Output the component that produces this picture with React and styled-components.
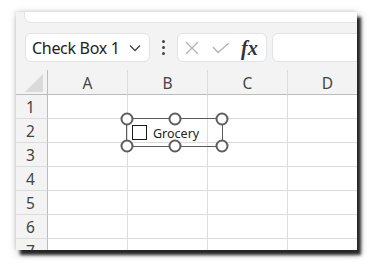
import React from 'react';
import styled, { createGlobalStyle } from 'styled-components';

const Global = createGlobalStyle`
  html, body { margin: 0; padding: 0; background: #fff; }
  body {
    width: 374px; height: 267px; overflow: hidden;
    font-family: "Noto Sans", "Liberation Sans", sans-serif;
  }
`;

const Stage = styled.div`
  width: 374px; height: 267px; box-sizing: border-box;
  padding: 12px 0 0 16px;
`;

const Window = styled.div`
  width: 341px; height: 238px;
  background: #f3f3f3;
  overflow: hidden;
  display: flex; flex-direction: column;
  box-shadow: 4px 5px 3px rgba(0,0,0,0.82), 2px 3px 9px rgba(0,0,0,0.28), -1px -1px 3px rgba(0,0,0,0.1);
`;

const Ribbon = styled.div`
  flex: none;
  height: 10px;
  margin-left: 8px;
  margin-right: -12px;
  background: #fff;
  border: 1px solid #e4e4e4;
  border-top: none;
  border-radius: 0 0 7px 7px;
`;

const FormulaBar = styled.div`
  flex: none;
  display: flex; align-items: center;
  height: 29px;
  margin-top: 10px;
  padding-left: 9px;
`;

const Field = styled.div`
  box-sizing: border-box;
  height: 29px;
  background: #fff;
  border: 1px solid #e2e2e2;
  border-radius: 6px;
  display: flex; align-items: center;
  flex: ${p => (p.$grow ? '1 0 auto' : 'none')};
  width: ${p => p.$w || 'auto'};
  margin-right: ${p => (p.$grow ? '-20px' : '0')};
`;

const NameText = styled.span`
  font-size: 16px;
  color: #222;
  padding-left: 6px;
  letter-spacing: -0.3px;
  flex: 1;
`;

const Chevron = styled.svg`
  width: 12px; height: 8px; margin-right: 8px;
`;

const Dots = styled.div`
  width: 27px;
  display: flex; flex-direction: column; align-items: center; gap: 3px;
  & > span { width: 3px; height: 3px; border-radius: 50%; background: #444; }
`;

const IconSlot = styled.svg`
  flex: none;
`;

const Fx = styled.span`
  font-family: "Liberation Serif", "DejaVu Serif", serif;
  font-style: italic;
  font-weight: bold;
  font-size: 20px;
  color: #333;
  margin-left: 11px;
  line-height: 1;
`;

const Sheet = styled.div`
  position: relative;
  margin-top: 8px;
  display: grid;
  grid-template-columns: 32px repeat(4, 80px);
  grid-template-rows: 25px;
  grid-auto-rows: 24px;
`;

const Corner = styled.div`
  position: relative;
  border-bottom: 1px solid #bcbcbc;
  border-right: 1px solid #bcbcbc;
  box-sizing: border-box;
  &::after {
    content: '';
    position: absolute;
    right: 4px; bottom: 2px;
    width: 0; height: 0;
    border-left: 18px solid transparent;
    border-bottom: 18px solid #dadada;
  }
`;

const ColHead = styled.div`
  box-sizing: border-box;
  border-bottom: 1px solid #bcbcbc;
  border-right: 1px solid #dcdcdc;
  display: flex; align-items: center; justify-content: center;
  font-size: 15.5px; color: #444;
  padding-top: 1px;
`;

const RowHead = styled.div`
  box-sizing: border-box;
  border-bottom: 1px solid #dcdcdc;
  border-right: 1px solid #bcbcbc;
  display: flex; align-items: center; justify-content: center;
  font-size: 15.5px; color: #444;
  padding-right: 2px;
`;

const Cell = styled.div`
  box-sizing: border-box;
  background: #fff;
  border-bottom: 1px solid #dcdcdc;
  border-right: 1px solid #dcdcdc;
`;

const CheckControl = styled.div`
  position: absolute;
  left: 110px; top: 48px;
  width: 97px; height: 29px;
  box-sizing: border-box;
  border: 1px solid #5a5a5a;
  display: flex; align-items: center;
  padding-left: 5px;
  gap: 6px;
`;

const Box = styled.span`
  width: 15px; height: 15px; box-sizing: border-box;
  border: 1px solid #1a1a1a;
  background: #fff;
`;

const Label = styled.span`
  font-size: 12.5px; color: #222;
  padding-top: 1px;
`;

const Handle = styled.span`
  position: absolute;
  width: 13px; height: 13px; box-sizing: border-box;
  border-radius: 50%;
  border: 2.5px solid #5e5e5e;
  background: #fff;
  left: ${p => p.$x}; top: ${p => p.$y};
  transform: translate(-50%, -50%);
`;

const cols = ['A', 'B', 'C', 'D'];
const rows = [1, 2, 3, 4, 5, 6, 7];
const handles = [
  ['0%', '0%'], ['50%', '0%'], ['100%', '0%'],
  ['0%', '100%'], ['50%', '100%'], ['100%', '100%'],
];

export default function App() {
  return (
    <>
      <Global />
      <Stage>
        <Window>
          <Ribbon />
          <FormulaBar>
            <Field $w="125px">
              <NameText>Check Box 1</NameText>
              <Chevron viewBox="0 0 12 8">
                <polyline points="1,1.5 6,6.5 11,1.5" fill="none" stroke="#444" strokeWidth="1.3" />
              </Chevron>
            </Field>
            <Dots><span /><span /><span /></Dots>
            <Field $w="90px">
              <IconSlot width="16" height="16" viewBox="0 0 16 16" style={{ marginLeft: 6 }}>
                <path d="M2 2 L14 14 M14 2 L2 14" stroke="#b4b4b4" strokeWidth="1.3" fill="none" />
              </IconSlot>
              <IconSlot width="18" height="12" viewBox="0 0 18 12" style={{ marginLeft: 12 }}>
                <polyline points="1,5 6,10.5 17,1" stroke="#b4b4b4" strokeWidth="1.3" fill="none" />
              </IconSlot>
              <Fx>fx</Fx>
            </Field>
            <Field $grow style={{ marginLeft: 5 }} />
          </FormulaBar>
          <Sheet>
            <Corner />
            {cols.map(c => <ColHead key={c}>{c}</ColHead>)}
            {rows.map(r => (
              <React.Fragment key={r}>
                <RowHead>{r}</RowHead>
                {cols.map(c => <Cell key={c} />)}
              </React.Fragment>
            ))}
            <CheckControl>
              <Box />
              <Label>Grocery</Label>
              {handles.map(([x, y], i) => <Handle key={i} $x={x} $y={y} />)}
            </CheckControl>
          </Sheet>
        </Window>
      </Stage>
    </>
  );
}
